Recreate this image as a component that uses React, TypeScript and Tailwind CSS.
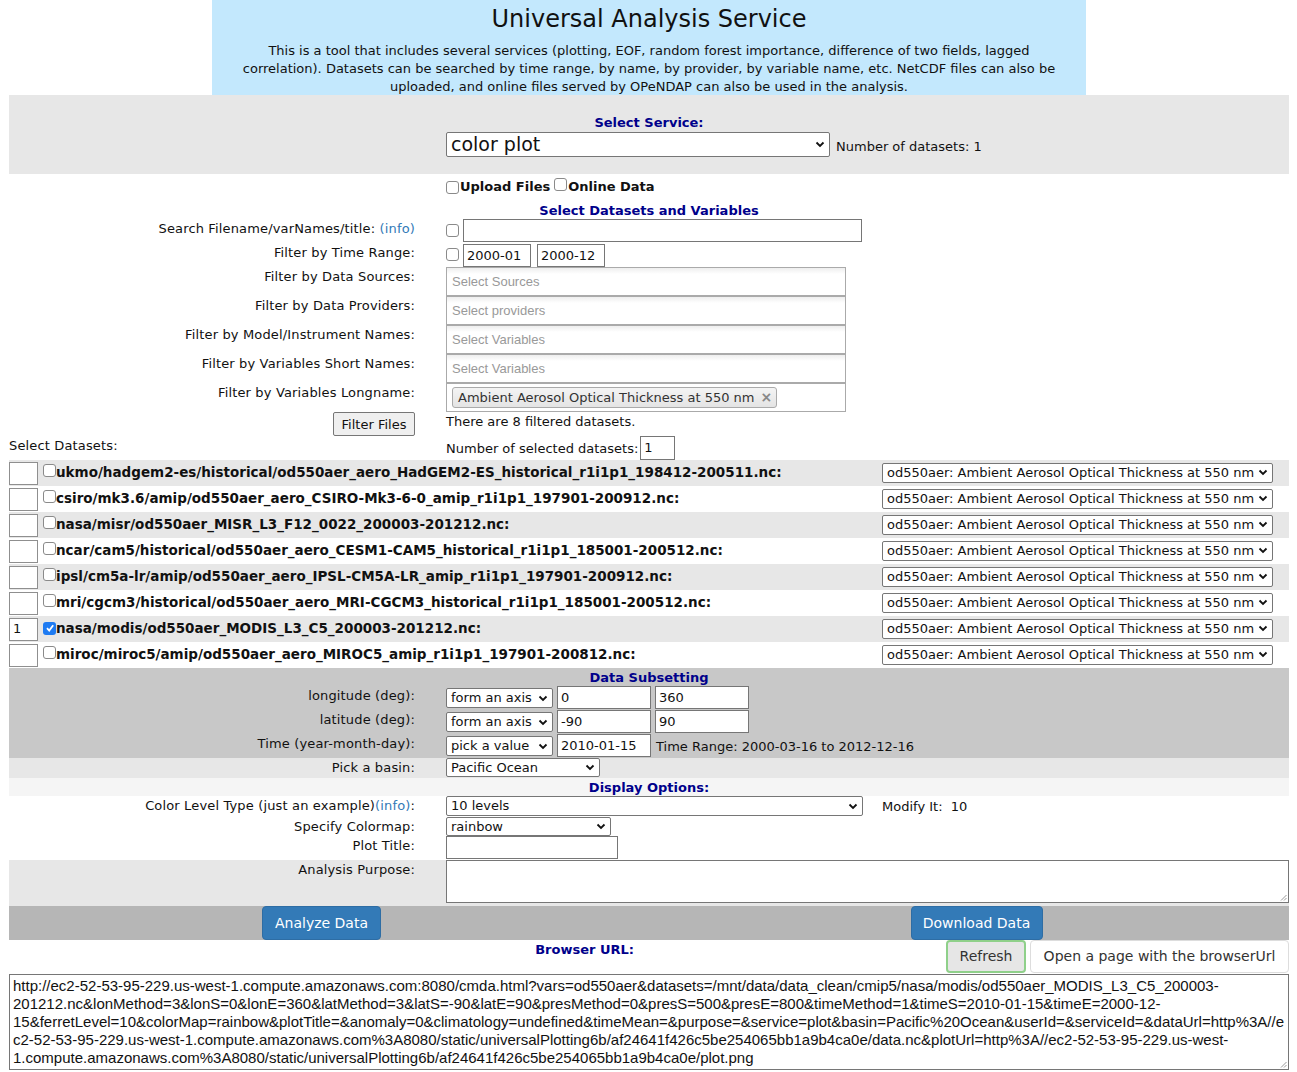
import React from 'react';

const datasets = [
    { name: 'ukmo/hadgem2-es/historical/od550aer_aero_HadGEM2-ES_historical_r1i1p1_198412-200511.nc:', n: '' },
    { name: 'csiro/mk3.6/amip/od550aer_aero_CSIRO-Mk3-6-0_amip_r1i1p1_197901-200912.nc:', n: '' },
    { name: 'nasa/misr/od550aer_MISR_L3_F12_0022_200003-201212.nc:', n: '' },
    { name: 'ncar/cam5/historical/od550aer_aero_CESM1-CAM5_historical_r1i1p1_185001-200512.nc:', n: '' },
    { name: 'ipsl/cm5a-lr/amip/od550aer_aero_IPSL-CM5A-LR_amip_r1i1p1_197901-200912.nc:', n: '' },
    { name: 'mri/cgcm3/historical/od550aer_aero_MRI-CGCM3_historical_r1i1p1_185001-200512.nc:', n: '' },
    { name: 'nasa/modis/od550aer_MODIS_L3_C5_200003-201212.nc:', n: '1' },
    { name: 'miroc/miroc5/amip/od550aer_aero_MIROC5_amip_r1i1p1_197901-200812.nc:', n: '' },
];

const urlLines = [
    'http://ec2-52-53-95-229.us-west-1.compute.amazonaws.com:8080/cmda.html?vars=od550aer&datasets=/mnt/data/data_clean/cmip5/nasa/modis/od550aer_MODIS_L3_C5_200003-',
    '201212.nc&lonMethod=3&lonS=0&lonE=360&latMethod=3&latS=-90&latE=90&presMethod=0&presS=500&presE=800&timeMethod=1&timeS=2010-01-15&timeE=2000-12-',
    '15&ferretLevel=10&colorMap=rainbow&plotTitle=&anomaly=0&climatology=undefined&timeMean=&purpose=&service=plot&basin=Pacific%20Ocean&userId=&serviceId=&dataUrl=http%3A//e',
    'c2-52-53-95-229.us-west-1.compute.amazonaws.com%3A8080/static/universalPlotting6b/af24641f426c5be254065bb1a9b4ca0e/data.nc&plotUrl=http%3A//ec2-52-53-95-229.us-west-',
    '1.compute.amazonaws.com%3A8080/static/universalPlotting6b/af24641f426c5be254065bb1a9b4ca0e/plot.png',
];

const Chevron = () => (
    <svg width="10" height="7" viewBox="0 0 10 7" className="shrink-0">
        <polyline points="1.5,1.5 5,5 8.5,1.5" fill="none" stroke="#111" strokeWidth="1.8" />
    </svg>
);

const Check = ({ checked = false }: { checked?: boolean }) =>
    checked ? (
        <span className="inline-flex w-[13px] h-[13px] shrink-0 items-center justify-center rounded-[3px] bg-[#1e7bf2]">
            <svg width="10" height="10" viewBox="0 0 10 10">
                <polyline points="2,5.2 4.2,7.5 8.2,2.2" fill="none" stroke="#fff" strokeWidth="1.8" />
            </svg>
        </span>
    ) : (
        <span className="inline-block w-[13px] h-[13px] shrink-0 rounded-[3px] border border-[#8a8a8a] bg-white" />
    );

const Select = ({ text, className }: { text: string; className: string }) => (
    <div className={`flex items-center justify-between border border-[#767676] rounded-[2px] bg-white pl-[4px] pr-[4px] ${className}`}>
        <span className="whitespace-nowrap">{text}</span>
        <Chevron />
    </div>
);

const Input = ({ value = '', className }: { value?: string; className: string }) => (
    <div className={`flex items-center border border-[#767676] bg-white px-[3px] ${className}`}>{value}</div>
);

const Row = ({ label, className = '', children }: { label: React.ReactNode; className?: string; children?: React.ReactNode }) => (
    <div className={`flex ${className}`}>
        <div className="h-[18px] w-[437px] shrink-0 pr-[31px] text-right leading-[20px] tracking-[0.15px]">{label}</div>
        <div className="flex flex-1 items-start">{children}</div>
    </div>
);

const MultiBox = ({ placeholder }: { placeholder: string }) => (
    <div className="flex h-[29px] w-[400px] items-center border border-[#aaa] bg-white bg-gradient-to-b from-[#eee] to-white to-[6px] pl-[5px] font-['Liberation_Sans',sans-serif] text-[13px] text-[#999]">
        {placeholder}
    </div>
);

const Heading = ({ children, className = '' }: { children: React.ReactNode; className?: string }) => (
    <div className={`h-[18px] text-center font-bold leading-[20px] text-[#00008b] ${className}`}>{children}</div>
);

export default function App() {
    return (
        <div className="min-h-screen bg-white font-['DejaVu_Sans',Verdana,sans-serif] text-[13px] text-[#111]">
            <div className="ml-[9px] w-[1280px]">
                {/* header */}
                <div className="mx-auto h-[95px] w-[874px] bg-[#c3e8fd] text-center">
                    <h1 className="h-[36px] text-[24px] leading-[38px]">Universal Analysis Service</h1>
                    <p className="mt-[5px] leading-[20px]">
                        <span className="block h-[18px]">This is a tool that includes several services (plotting, EOF, random forest importance, difference of two fields, lagged</span>
                        <span className="block h-[18px]">correlation). Datasets can be searched by time range, by name, by provider, by variable name, etc. NetCDF files can also be</span>
                        <span className="block h-[18px]">uploaded, and online files served by OPeNDAP can also be used in the analysis.</span>
                    </p>
                </div>

                {/* service */}
                <div className="h-[79px] bg-[#e7e7e7] pt-[18px]">
                    <Heading>Select Service:</Heading>
                    <div className="mt-[1px] flex items-center">
                        <div className="w-[437px]" />
                        <div className="flex h-[25px] w-[384px] items-center justify-between border border-[#767676] rounded-[2px] bg-white pl-[4px] pr-[4px] text-[19px]">
                            <span>color plot</span>
                            <Chevron />
                        </div>
                        <span className="ml-[6px] mt-[5px]">Number of datasets: 1</span>
                    </div>
                </div>

                {/* datasets and variables */}
                <div className="mt-[4px] flex h-[18px] items-center">
                    <div className="w-[437px]" />
                    <Check />
                    <span className="ml-[1px] font-bold">Upload Files</span>
                    <span className="ml-[4px]"><Check /></span>
                    <span className="ml-[1px] font-bold">Online Data</span>
                </div>
                <Heading className="mt-[5px]">Select Datasets and Variables</Heading>

                <Row className="h-[24px]" label={<>Search Filename/varNames/title: <span className="text-[#337ab7]">(info)</span></>}>
                    <span className="mt-[4px]"><Check /></span>
                    <Input className="ml-[4px] h-[23px] w-[399px]" />
                </Row>
                <Row className="h-[24px]" label="Filter by Time Range:">
                    <span className="mt-[4px]"><Check /></span>
                    <Input value="2000-01" className="ml-[4px] mt-[1px] h-[23px] w-[68px]" />
                    <Input value="2000-12" className="ml-[6px] mt-[1px] h-[23px] w-[68px]" />
                </Row>
                <Row label="Filter by Data Sources:">
                    <MultiBox placeholder="Select Sources" />
                </Row>
                <Row label="Filter by Data Providers:">
                    <MultiBox placeholder="Select providers" />
                </Row>
                <Row label="Filter by Model/Instrument Names:">
                    <MultiBox placeholder="Select Variables" />
                </Row>
                <Row label="Filter by Variables Short Names:">
                    <MultiBox placeholder="Select Variables" />
                </Row>
                <Row label="Filter by Variables Longname:">
                    <div className="flex h-[29px] w-[400px] items-center border border-[#aaa] bg-white pl-[5px]">
                        <span className="flex h-[21px] items-center rounded-[3px] border border-[#aaa] bg-gradient-to-b from-[#f4f4f4] to-[#e4e4e4] pl-[5px] pr-[4px] text-[#333]">
                            Ambient Aerosol Optical Thickness at 550 nm
                            <span className="ml-[6px] text-[14px] font-bold text-[#888]">×</span>
                        </span>
                    </div>
                </Row>
                <div className="flex h-[24px]">
                    <div className="flex w-[437px] shrink-0 justify-end pr-[31px]">
                        <button className="h-[24px] w-[82px] rounded-[2px] border border-[#767676] bg-[#efefef] text-[13px] leading-[24px]">Filter Files</button>
                    </div>
                    <div className="h-[18px] leading-[20px]">There are 8 filtered datasets.</div>
                </div>
                <div className="flex h-[24px]">
                    <div className="h-[18px] w-[437px] shrink-0 leading-[20px] tracking-[0.15px]">Select Datasets:</div>
                    <div className="flex items-center">
                        <span className="mt-[1px]">Number of selected datasets:</span>
                        <Input value="1" className="ml-[2px] h-[24px] w-[35px]" />
                    </div>
                </div>

                {/* dataset rows */}
                {datasets.map((d, i) => (
                    <div key={d.name} className={`flex h-[26px] items-center ${i % 2 === 0 ? 'bg-[#e7e7e7]' : 'bg-white'}`}>
                        <div className="flex h-[23px] w-[29px] shrink-0 items-center border border-[#8f8f8f] bg-white pl-[3px]">{d.n}</div>
                        <span className="ml-[5px]"><Check checked={d.n === '1'} /></span>
                        <span className="mb-[1px] flex-1 whitespace-nowrap text-[13.5px] font-bold">{d.name}</span>
                        <Select text="od550aer: Ambient Aerosol Optical Thickness at 550 nm" className="mb-[1px] mr-[16px] h-[20px] w-[391px]" />
                    </div>
                ))}

                {/* data subsetting */}
                <div className="h-[90px] bg-[#c8c8c8]">
                    <Heading>Data Subsetting</Heading>
                    <Row className="h-[24px]" label="longitude (deg):">
                        <Select text="form an axis" className="mt-[2px] h-[20px] w-[107px]" />
                        <Input value="0" className="ml-[4px] h-[23px] w-[94px]" />
                        <Input value="360" className="ml-[4px] h-[23px] w-[94px]" />
                    </Row>
                    <Row className="h-[24px]" label="latitude (deg):">
                        <Select text="form an axis" className="mt-[2px] h-[20px] w-[107px]" />
                        <Input value="-90" className="ml-[4px] h-[23px] w-[94px]" />
                        <Input value="90" className="ml-[4px] h-[23px] w-[94px]" />
                    </Row>
                    <Row className="h-[24px]" label="Time (year-month-day):">
                        <Select text="pick a value" className="mt-[2px] h-[20px] w-[107px]" />
                        <Input value="2010-01-15" className="ml-[4px] h-[23px] w-[94px]" />
                        <span className="ml-[5px] mt-[3px]">Time Range: 2000-03-16 to 2012-12-16</span>
                    </Row>
                </div>
                <Row className="h-[20px] bg-[#e7e7e7]" label="Pick a basin:">
                    <Select text="Pacific Ocean" className="h-[19px] w-[154px]" />
                </Row>

                {/* display options */}
                <Heading className="bg-[#f5f5f5]">Display Options:</Heading>
                <Row className="h-[21px]" label={<>Color Level Type (just an example)<span className="text-[#337ab7]">(info)</span>:</>}>
                    <Select text="10 levels" className="h-[20px] w-[417px]" />
                    <span className="ml-[19px] mt-[1px]">Modify It:&nbsp; 10</span>
                </Row>
                <Row className="h-[19px]" label="Specify Colormap:">
                    <Select text="rainbow" className="h-[19px] w-[165px]" />
                </Row>
                <Row className="h-[24px]" label="Plot Title:">
                    <Input className="h-[23px] w-[172px]" />
                </Row>
                <Row className="h-[46px] bg-[#e7e7e7]" label="Analysis Purpose:">
                    <div className="relative h-[43px] flex-1 border border-[#767676] bg-white">
                        <svg width="7" height="7" viewBox="0 0 7 7" className="absolute bottom-[1px] right-[1px]">
                            <line x1="1" y1="6.5" x2="6.5" y2="1" stroke="#999" />
                            <line x1="4" y1="6.5" x2="6.5" y2="4" stroke="#999" />
                        </svg>
                    </div>
                </Row>

                {/* actions */}
                <div className="flex h-[34px] bg-[#b6b6b6]">
                    <div className="flex w-[625px] justify-center">
                        <button className="h-[34px] w-[119px] rounded-[4px] border border-[#2e6da4] bg-[#337ab7] text-[14px] text-white">Analyze Data</button>
                    </div>
                    <div className="ml-[30px] flex w-[625px] justify-center">
                        <button className="h-[34px] w-[132px] rounded-[4px] border border-[#2e6da4] bg-[#337ab7] text-[14px] text-white">Download Data</button>
                    </div>
                </div>
                <div className="flex h-[34px]">
                    <div className="h-[18px] w-[625px] text-right font-bold leading-[20px] text-[#00008b]">Browser URL:</div>
                    <div className="flex flex-1 justify-end">
                        <button className="h-[33px] w-[80px] rounded-[4px] border-2 border-[#8fd08a] bg-[#e6e6e6] text-[14px] text-[#333]">Refresh</button>
                        <button className="ml-[4px] h-[33px] w-[259px] rounded-[4px] border border-[#ddd] bg-white text-[14px] text-[#333]">Open a page with the browserUrl</button>
                    </div>
                </div>
                <div className="relative h-[96px] border border-[#767676] bg-white px-[3px] pt-[2px] font-['Liberation_Sans',Arial,sans-serif] text-[15px] leading-[18px] text-[#111]">
                    {urlLines.map((l) => (
                        <div key={l} className="whitespace-nowrap">{l}</div>
                    ))}
                    <svg width="7" height="7" viewBox="0 0 7 7" className="absolute bottom-[1px] right-[1px]">
                        <line x1="1" y1="6.5" x2="6.5" y2="1" stroke="#999" />
                        <line x1="4" y1="6.5" x2="6.5" y2="4" stroke="#999" />
                    </svg>
                </div>
            </div>
        </div>
    );
}
